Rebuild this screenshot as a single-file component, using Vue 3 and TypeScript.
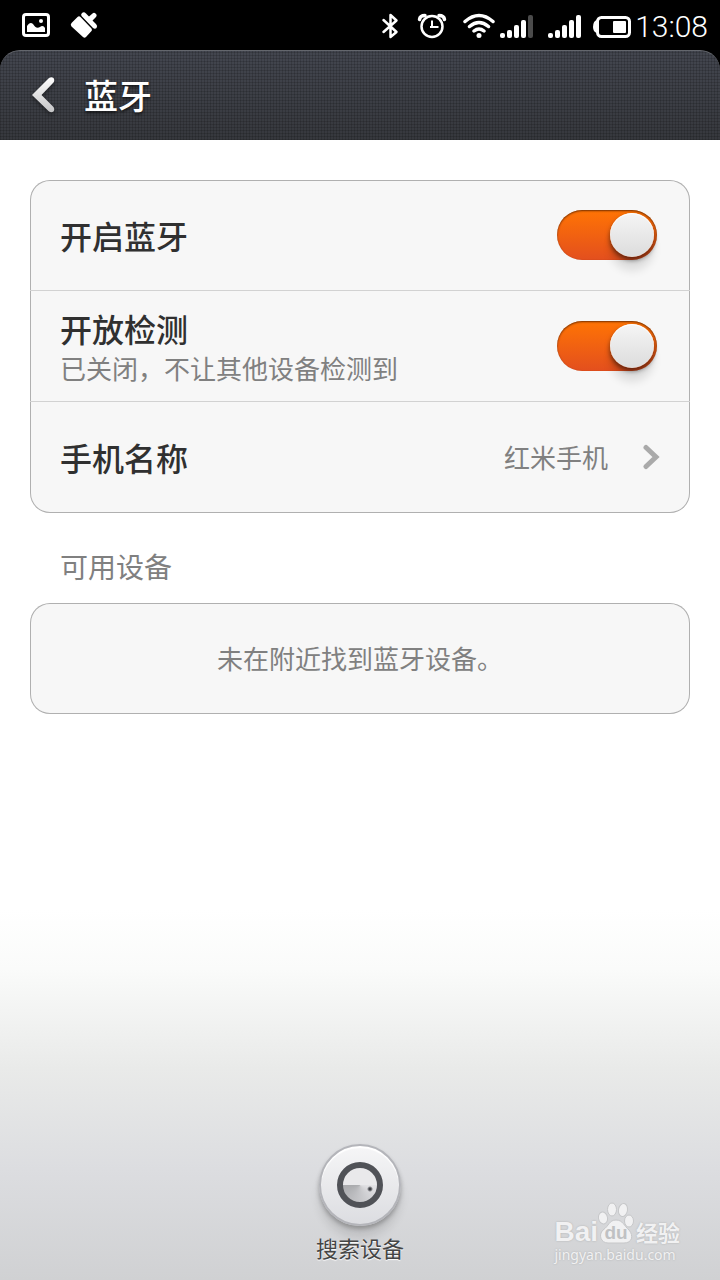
<script setup lang="ts">
import { ref } from 'vue'

const enabled = ref(true)
const discoverable = ref(true)
const deviceName = ref('红米手机')
</script>

<template>
  <div class="screen">
    <div class="status">
      <svg width="80" height="30" viewBox="20 10 80 30">
        <rect x="23.5" y="14.5" width="25" height="21" rx="2.5" fill="none" stroke="#fff" stroke-width="3" />
        <path d="M27 32V26C29 23 31 22 33 24C35 27 37 29 40 27C42 25 44 26 45 28V32Z" fill="#fff" />
        <circle cx="41" cy="21" r="2" fill="#fff" />
        <g fill="#fff">
          <path d="M71.5 23L77.5 17Q79 15.5 80.5 17L91.5 28.5Q92.5 30 91.5 31L86 37Q84.5 38.5 83 37L71.5 26.5Q70 24.5 71.5 23Z" />
          <path d="M82 13Q84 11.5 86 13.5L89 16.5L92.5 13.5Q94 12 95.5 13.5Q97.5 15 96 17L92.5 20.5L96 24Q98 26 96.5 28Q95 29.5 93 28L81.5 16Q80.5 14.5 82 13Z" />
        </g>
      </svg>
      <svg class="right-icons" width="254" height="30" viewBox="380 10 254 30">
        <path d="M383.5 20L396.5 32L390.5 37V15L396.5 20.5L383.5 32" fill="none" stroke="#fff" stroke-width="2.5" stroke-linecap="round" stroke-linejoin="round" />
        <g fill="none" stroke="#fff">
          <circle cx="432" cy="26.5" r="10.5" stroke-width="2.5" />
          <path d="M432 20.5V27H438.5M430 27H432" stroke-width="2" />
          <path d="M419.5 19.5Q420 15.5 425 15.5M439 15.5Q444 15.5 444.5 19.5" stroke-width="3.5" stroke-linecap="round" />
          <path d="M465 21.5Q479 9.5 493 21.5M469.5 26.5Q479 18.5 488.5 26.5M474 31Q479 27 484 31" stroke-width="3.5" stroke-linecap="round" />
        </g>
        <circle cx="479" cy="35.5" r="2.5" fill="#fff" />
        <g fill="#fff">
          <rect x="500" y="33" width="5" height="5" rx="2" />
          <rect x="507" y="30" width="5" height="8" rx="2" />
          <rect x="514" y="25" width="5" height="13" rx="2" />
          <rect x="521" y="20" width="5" height="18" rx="2" />
          <rect x="528" y="15" width="5" height="23" rx="2" fill="#4b4b4b" />
          <rect x="548" y="33" width="5" height="5" rx="2" />
          <rect x="555" y="30" width="5" height="8" rx="2" />
          <rect x="562" y="25" width="5" height="13" rx="2" />
          <rect x="569" y="20" width="5" height="18" rx="2" />
          <rect x="576" y="15" width="5" height="23" rx="2" />
          <path d="M597 20Q593 21 593 27Q593 32 597 33Z" />
          <rect x="613" y="21" width="13" height="12" rx="1" />
        </g>
        <rect x="597.5" y="17.5" width="32" height="19" rx="4" fill="none" stroke="#fff" stroke-width="3" />
      </svg>
      <time class="clock">13:08</time>
    </div>

    <header class="bar">
      <button class="back" type="button" aria-label="返回">
        <svg width="24" height="38" viewBox="0 0 24 38">
          <defs>
            <linearGradient id="chevron" x1="0" y1="0" x2="0" y2="1">
              <stop offset="0" stop-color="#fff" />
              <stop offset="1" stop-color="#c4c4c6" />
            </linearGradient>
          </defs>
          <path d="M17 2Q19.5 .5 21.5 2Q23 4 21.5 6.5L9.5 19L21.5 31Q23 33.5 21.5 35.5Q19.5 37 17 35.5L0 19Z" fill="url(#chevron)" />
        </svg>
      </button>
      <h1>蓝牙</h1>
    </header>

    <main>
      <section class="card">
        <div class="row">
          <label class="title" for="bt-on">开启蓝牙</label>
          <input id="bt-on" v-model="enabled" class="switch" type="checkbox" />
        </div>
        <div class="row">
          <label class="text" for="bt-visible">
            <span class="title">开放检测</span>
            <span class="sub">已关闭，不让其他设备检测到</span>
          </label>
          <input id="bt-visible" v-model="discoverable" class="switch" type="checkbox" />
        </div>
        <button class="row link" type="button">
          <span class="title">手机名称</span>
          <span class="value">{{ deviceName }}</span>
          <svg class="next" width="18" height="26" viewBox="0 0 18 26">
            <path d="M4 3.5L14 13L4 22.5" fill="none" stroke="#aaa" stroke-width="5" stroke-linecap="round" />
          </svg>
        </button>
      </section>

      <h2>可用设备</h2>
      <section class="card empty">
        <p>未在附近找到蓝牙设备。</p>
      </section>
    </main>

    <footer>
      <button class="search" type="button">
        <span class="disc">
          <span class="radar"></span>
        </span>
        <span class="caption">搜索设备</span>
      </button>
      <div class="mark">
        <div class="brand">
          <span class="latin">Bai</span>
          <span class="paw">
            <svg width="36" height="42" viewBox="0 0 36 42">
              <g fill="#f1f1f2" stroke="#c6c7c9" stroke-width="1">
                <ellipse cx="5" cy="16" rx="4.5" ry="6" transform="rotate(-10 5 16)" />
                <ellipse cx="14" cy="7.5" rx="4.5" ry="6.5" />
                <ellipse cx="25" cy="8" rx="4.5" ry="6.5" transform="rotate(10 25 8)" />
                <ellipse cx="31" cy="19" rx="4.5" ry="6" />
                <path d="M18 18C11 18 11 24 5 28C0 33 3 41 10 41H26C34 41 36 34 31 28C26 24 25 18 18 18Z" />
              </g>
            </svg>
            <span class="du">du</span>
          </span>
          <span class="han">经验</span>
        </div>
        <span class="site">jingyan.baidu.com</span>
      </div>
    </footer>
  </div>
</template>

<style>
html,
body {
  margin: 0;
  background: #000;
}
</style>

<style scoped>
.screen {
  min-height: 100vh;
  display: flex;
  flex-direction: column;
  background: #000;
  font-family: "Noto Sans CJK SC", sans-serif;
  color: #303030;
}
.screen * {
  box-sizing: border-box;
}
button {
  margin: 0;
  padding: 0;
  border: 0;
  background: none;
  font: inherit;
  color: inherit;
}
.status {
  height: 50px;
  display: flex;
  align-items: center;
  padding: 0 12px 0 20px;
}
.right-icons {
  margin-left: auto;
}
.clock {
  margin-left: 1px;
  padding-top: 4px;
  font: 300 30px/36px Roboto, sans-serif;
  color: #fff;
}
.bar {
  height: 90px;
  display: flex;
  align-items: center;
  gap: 28px;
  padding: 0 32px 2px;
  border-top: 1px solid #64676d;
  border-radius: 20px 20px 0 0;
  background:
    repeating-linear-gradient(90deg, rgba(0, 0, 0, 0.15) 0 1px, transparent 1px 3px),
    repeating-linear-gradient(0deg, rgba(0, 0, 0, 0.15) 0 1px, transparent 1px 3px),
    linear-gradient(#43464f, #36383d);
}
.back {
  display: flex;
  filter: drop-shadow(0 2px 2px rgba(0, 0, 0, 0.4));
}
h1 {
  margin: 0;
  font-size: 34px;
  line-height: 48px;
  font-weight: 500;
  color: #fff;
  text-shadow: 0 2px 3px rgba(0, 0, 0, 0.6);
}
main {
  flex: 1;
  padding: 40px 30px;
  background: #fff;
}
.card {
  border-radius: 20px;
  background: #f7f7f7;
  box-shadow: inset 0 0 0 1px #b0b0b0;
}
.row {
  width: 100%;
  min-height: 111px;
  display: flex;
  align-items: center;
  justify-content: space-between;
  padding: 0 30px;
  text-align: left;
}
.row:not(:last-child) {
  border-bottom: 1px solid #d2d2d2;
}
.link {
  padding-bottom: 2px;
}
.text {
  display: flex;
  flex-direction: column;
  gap: 1px;
  padding-top: 2px;
}
.title {
  font-size: 32px;
  line-height: 40px;
  font-weight: 500;
}
.sub,
.value,
.empty p {
  font-size: 26px;
  line-height: 38px;
  color: #808080;
}
.value {
  margin-left: auto;
}
.next {
  margin-left: 34px;
}
.switch {
  appearance: none;
  flex: none;
  width: 100px;
  height: 50px;
  margin: 0 3px 0 0;
  padding: 3px;
  display: flex;
  justify-content: flex-start;
  border-radius: 25px;
  background: linear-gradient(#aaa, #ccc);
  box-shadow: inset 0 1px 2px rgba(80, 30, 0, 0.8);
}
.switch:checked {
  justify-content: flex-end;
  background: linear-gradient(#ff7404, #e34f1e);
}
.switch::before {
  content: "";
  width: 44px;
  height: 44px;
  border-radius: 50%;
  background: linear-gradient(#f5f5f5, #dcdcdc);
  box-shadow:
    inset 0 1px 1px #fff,
    0 3px 5px rgba(0, 0, 0, 0.55),
    0 14px 8px rgba(0, 0, 0, 0.1);
}
h2 {
  margin: 33px 30px 17px;
  font-size: 28px;
  line-height: 40px;
  font-weight: 400;
  color: #808080;
}
.empty {
  min-height: 111px;
  display: grid;
  place-items: center;
  padding-bottom: 2px;
}
.empty p {
  margin: 0;
}
footer {
  min-height: 370px;
  display: grid;
  grid-template-columns: 1fr auto 1fr;
  align-items: end;
  padding-bottom: 16px;
  background: linear-gradient(#fff, #fafbfa 16%, #e9eae9 43%, #dcdde0 70%, #d0d1d3);
}
.search {
  grid-column: 2;
  display: flex;
  flex-direction: column;
  align-items: center;
  gap: 4px;
}
.disc {
  width: 82px;
  height: 82px;
  display: grid;
  place-items: center;
  border: 2px solid #b4b5ba;
  border-radius: 50%;
  background: linear-gradient(#f6f6f7, #dcdde1);
  box-shadow:
    inset 0 2px 1px #fff,
    0 3px 4px rgba(0, 0, 0, 0.25),
    0 12px 10px rgba(0, 0, 0, 0.1);
}
.radar {
  width: 46px;
  height: 46px;
  border: 6px solid #505257;
  border-radius: 50%;
  background:
    radial-gradient(circle at 27px 21px, #404247 0 1px, transparent 3px),
    conic-gradient(#e9e9eb 0 25%, #e2e2e5 25%, #a9aaad 75%, #e9e9eb 75%);
}
.caption {
  font-size: 22px;
  line-height: 34px;
  color: #454545;
  text-shadow: 0 1px 1px #fff;
}
.mark {
  justify-self: end;
  display: flex;
  flex-direction: column;
  gap: 2px;
  padding-right: 40px;
  color: #f1f1f2;
  text-shadow: 0 0 2px #aaabad;
}
.brand {
  display: flex;
  align-items: flex-end;
}
.latin {
  font: 700 28px/24px "Liberation Sans", sans-serif;
}
.paw {
  position: relative;
  display: flex;
}
.du {
  position: absolute;
  inset: auto 0 0;
  text-align: center;
  font: 700 19px/22px "Liberation Sans", sans-serif;
  color: #c0c1c3;
  text-shadow: none;
}
.han {
  margin-left: 2px;
  font-size: 22px;
  line-height: 26px;
  font-weight: 700;
}
.site {
  font: 400 14px/18px "Noto Sans", sans-serif;
}
</style>
